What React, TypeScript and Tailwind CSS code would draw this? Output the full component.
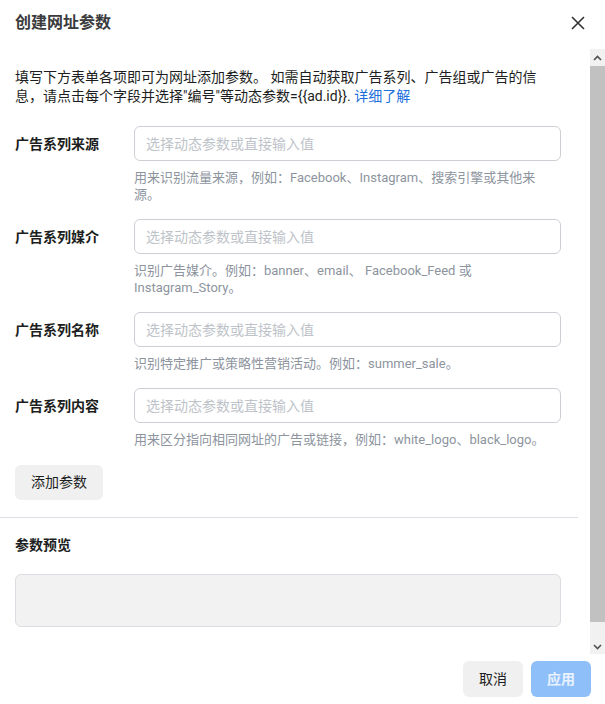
import React from 'react';

const fields = [
  {
    label: '广告系列来源',
    help: '用来识别流量来源，例如：Facebook、Instagram、搜索引擎或其他来源。',
  },
  {
    label: '广告系列媒介',
    help: '识别广告媒介。例如：banner、email、 Facebook_Feed 或 Instagram_Story。',
  },
  {
    label: '广告系列名称',
    help: '识别特定推广或策略性营销活动。例如：summer_sale。',
  },
  {
    label: '广告系列内容',
    help: '用来区分指向相同网址的广告或链接，例如：white_logo、black_logo。',
  },
];

const intro =
  '填写下方表单各项即可为网址添加参数。 如需自动获取广告系列、广告组或广告的信息，请点击每个字段并选择"编号"等动态参数={{ad.id}}. ';

const Scrollbar: React.FC = () => (
  <div className="w-[15px] shrink-0 flex flex-col bg-[#f1f1f1]">
    <div className="h-[17px] flex items-center justify-center">
      <svg width="9" height="6" viewBox="0 0 9 6">
        <path d="M1 5 L4.5 1.5 L8 5" fill="none" stroke="#505050" strokeWidth="1.6" />
      </svg>
    </div>
    <div className="h-[556px] bg-[#c1c1c1]" />
    <div className="flex-1 flex items-end justify-center pb-[4px]">
      <svg width="9" height="6" viewBox="0 0 9 6">
        <path d="M1 1 L4.5 4.5 L8 1" fill="none" stroke="#505050" strokeWidth="1.6" />
      </svg>
    </div>
  </div>
);

const App: React.FC = () => {
  return (
    <div
      className="w-[605px] h-[704px] bg-white flex flex-col overflow-hidden text-[#1c1e21]"
      style={{ fontFamily: 'Roboto, "Noto Sans CJK SC", sans-serif' }}
    >
      {/* header */}
      <div className="h-[49px] shrink-0 flex items-center justify-between pl-[15px] pr-[19px]">
        <h1 className="text-[16px] leading-[20px] font-bold text-[#3a3b3c] -mt-[3px]">创建网址参数</h1>
        <button className="w-[16px] h-[16px] flex items-center justify-center -mt-[3px]">
          <svg width="14" height="14" viewBox="0 0 14 14">
            <path d="M1 1 L13 13 M13 1 L1 13" stroke="#333" strokeWidth="1.6" />
          </svg>
        </button>
      </div>

      {/* body */}
      <div className="h-[605px] shrink-0 flex">
        <div className="flex-1 pr-[12px] overflow-hidden">
          <div className="pl-[15px] pr-[17px] pt-[19px]">
            <p className="text-[14px] leading-[19px]">
              {intro}
              <a className="text-[#216fdb]">详细了解</a>
            </p>

            <div className="mt-[20px] flex flex-col">
              {fields.map((f) => (
                <div key={f.label} className="flex mb-[16px]">
                  <div className="w-[119px] shrink-0 h-[35px] flex items-center text-[14px] font-bold leading-[18px]">
                    {f.label}
                  </div>
                  <div className="flex-1">
                    <input
                      type="text"
                      placeholder="选择动态参数或直接输入值"
                      className="w-full h-[35px] border border-[#ccd0d5] rounded-[6px] px-[11px] text-[14px] placeholder:text-[#bec3c9] outline-none"
                    />
                    <p className="mt-[8px] text-[13px] leading-[17px] text-[#8d949e] pr-[6px]">{f.help}</p>
                  </div>
                </div>
              ))}
            </div>

            <button className="mt-[1px] h-[35px] px-[16px] rounded-[6px] bg-[#f0f0f0] text-[14px] text-[#1c1e21]">
              添加参数
            </button>
          </div>

          <div className="mt-[17px] border-t border-[#dadde1]" />

          <div className="pl-[15px] pr-[17px] pt-[17px]">
            <div className="text-[14px] font-bold leading-[20px] text-[#1c1e21]">参数预览</div>
            <div className="mt-[19px] h-[53px] rounded-[6px] border border-[#dadde1] bg-[#f2f2f2]" />
          </div>
        </div>
        <Scrollbar />
      </div>

      {/* footer */}
      <div className="flex-1 flex items-start justify-end gap-[8px] pt-[7px] pr-[14px]">
        <button className="w-[60px] h-[36px] rounded-[6px] bg-[#f0f0f0] text-[14px] text-[#1c1e21]">
          取消
        </button>
        <button className="w-[60px] h-[36px] rounded-[6px] bg-[#8fbff9] text-[14px] font-bold text-white/80">
          应用
        </button>
      </div>
    </div>
  );
};

export default App;
